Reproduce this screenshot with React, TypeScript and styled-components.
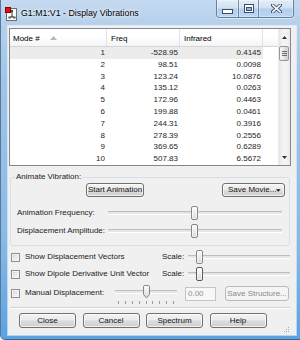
import React from 'react';
import styled, { createGlobalStyle } from 'styled-components';

const FONT = `"Liberation Sans", Arial, sans-serif`;

const GlobalStyle = createGlobalStyle`
  html, body { margin: 0; padding: 0; background: #fff; }
  body { font-family: ${FONT}; font-size: 8px; color: #222; }
  *, *::before, *::after { box-sizing: border-box; }
`;

const Window = styled.div`
  width: 300px;
  height: 340px;
  display: flex;
  flex-direction: column;
  background: linear-gradient(180deg, #c4d9ef 0px, #b5d0eb 25px, #a2c5e7 80px, #89b9e5 240px, #5aa2e2 100%);
  border-left: 1px solid #55799e;
  border-bottom: 1px solid #3d6588;
  border-bottom-left-radius: 5px;
  overflow: hidden;
`;

const TitleBar = styled.div`
  height: 26px;
  flex-shrink: 0;
  display: flex;
  align-items: flex-start;
`;

const IconWrap = styled.div`
  margin: 7px 0 0 4px;
  width: 13px;
  height: 14px;
  display: flex;
`;

const Title = styled.div`
  margin: 7px 0 0 3px;
  font-size: 8.8px;
  line-height: 12px;
  color: #000;
  white-space: nowrap;
  text-shadow: 0 0 6px rgba(255, 255, 255, 0.9), 0 0 3px rgba(255, 255, 255, 0.8);
`;

const Caption = styled.div`
  margin: 0 6px 0 auto;
  height: 18px;
  display: flex;
  border: 1px solid rgba(45, 70, 105, 0.6);
  border-top: none;
  border-radius: 0 0 4px 4px;
  overflow: hidden;
  box-shadow: 0 1px 0 rgba(255, 255, 255, 0.5);
`;

const CapBtn = styled.div<{ $w: number }>`
  width: ${(p) => p.$w}px;
  height: 100%;
  display: flex;
  align-items: center;
  justify-content: center;
  background: linear-gradient(180deg, rgba(255, 255, 255, 0.5) 0%, rgba(255, 255, 255, 0.28) 48%, rgba(150, 190, 230, 0.35) 52%, rgba(190, 220, 248, 0.5) 100%);
  box-shadow: inset 0 0 0 1px rgba(255, 255, 255, 0.35);
  & + & { border-left: 1px solid rgba(45, 70, 105, 0.55); }
`;

const Frame = styled.div`
  flex: 1;
  display: flex;
  padding: 0 4px 4px 7px;
`;

const Client = styled.div`
  flex: 1;
  display: flex;
  flex-direction: column;
  background: #f0f0f0;
  box-shadow: 0 0 0 1px rgba(255, 255, 255, 0.55);
`;

/* ---------- list view ---------- */
const ListView = styled.div`
  margin: 2px 5px 0 1px;
  height: 138px;
  border: 1px solid #828790;
  background: #fff;
  display: grid;
  grid-template-columns: 1fr 12px;
`;

const Table = styled.div`
  display: flex;
  flex-direction: column;
  min-width: 0;
`;

const HeaderRow = styled.div`
  display: grid;
  grid-template-columns: 97px 73px 83px 1fr;
  height: 18px;
  background: linear-gradient(180deg, #ffffff 0%, #ffffff 45%, #f3f4f6 100%);
  border-bottom: 1px solid #d5d5d5;
`;

const HeaderCell = styled.div<{ $pl: number; $last?: boolean }>`
  display: flex;
  align-items: center;
  padding: 2px 0 0 ${(p) => p.$pl}px;
  border-right: ${(p) => (p.$last ? 'none' : '1px solid #e2e3e5')};
  color: #000;
  white-space: nowrap;
`;

const SortArrow = styled.svg`
  margin-left: 10px;
  margin-top: -1px;
`;

const DataRow = styled.div`
  display: grid;
  grid-template-columns: 97px 73px 83px 1fr;
  height: 11.8px;
`;

const Cell = styled.div<{ $sel?: boolean }>`
  text-align: right;
  padding-right: 2px;
  line-height: 11.8px;
  background: ${(p) => (p.$sel ? '#ececec' : 'transparent')};
  color: #1e1e1e;
`;

const ScrollBar = styled.div`
  display: flex;
  flex-direction: column;
  background: linear-gradient(90deg, #e6e6e6 0%, #f3f3f3 30%, #f3f3f3 70%, #eaeaea 100%);
  border-left: 1px solid #ececec;
`;

const ScrollArrow = styled.div`
  height: 16px;
  display: flex;
  align-items: center;
  justify-content: center;
`;

const ScrollThumb = styled.div`
  height: 15px;
  margin: 1px 1px 0 0;
  border: 1px solid #979797;
  border-radius: 2px;
  background: linear-gradient(90deg, #f6f6f6 0%, #ececec 50%, #dedede 50%, #d4d4d4 100%);
  display: flex;
  align-items: center;
  justify-content: center;
`;

const ScrollTrack = styled.div`
  flex: 1;
`;

/* ---------- group box ---------- */
const Group = styled.fieldset`
  margin: 6px 6px 0 2px;
  padding: 1px 4px 7px 6px;
  border: 1px solid #d5dfe5;
  border-radius: 3px;
  min-width: 0;
`;

const Legend = styled.legend`
  padding: 0 1px;
  margin-left: -2px;
  line-height: 10px;
  font-size: 8px;
`;

const ButtonRow = styled.div`
  display: flex;
  height: 14px;
`;

const Btn = styled.button<{ $w: number; $h?: number; $ml?: number; $mt?: number }>`
  width: ${(p) => p.$w}px;
  height: ${(p) => p.$h ?? 15}px;
  margin: ${(p) => p.$mt ?? 0}px 0 0 ${(p) => (p.$ml === undefined ? 0 : p.$ml)}px;
  padding: 0;
  flex-shrink: 0;
  font: 8px/1 ${FONT};
  color: #141414;
  border: 1px solid #707070;
  border-radius: 3px;
  background: linear-gradient(180deg, #f3f3f3 0%, #ebebeb 45%, #dddddd 52%, #cfcfcf 100%);
  box-shadow: inset 0 0 0 1px rgba(255, 255, 255, 0.7);
  display: flex;
  align-items: center;
  justify-content: center;
  white-space: nowrap;
  &:disabled {
    border-color: #b5babd;
    background: #f4f4f4;
    color: #8a8a8a;
    box-shadow: none;
  }
`;

const SplitBtn = styled(Btn)`
  margin-left: auto;
  justify-content: space-between;
  padding: 0 3px 0 5px;
`;

const SliderRow = styled.div<{ $mt: number }>`
  display: flex;
  align-items: center;
  height: 14px;
  margin: ${(p) => p.$mt}px 3px 0 0;
`;

const RowLabel = styled.div<{ $w: number; $ml?: number; $mt?: number }>`
  width: ${(p) => p.$w}px;
  flex-shrink: 0;
  margin: ${(p) => p.$mt ?? 0}px 0 0 ${(p) => p.$ml ?? 0}px;
  line-height: 10px;
  white-space: nowrap;
`;

const Track = styled.div<{ $w?: number; $h?: number }>`
  position: relative;
  height: ${(p) => p.$h ?? 14}px;
  flex: ${(p) => (p.$w ? `0 0 ${p.$w}px` : '1 1 auto')};
  background: linear-gradient(
    180deg,
    transparent 5px,
    #bdbdbd 5px,
    #bdbdbd 6px,
    #e4e6e7 6px,
    #e4e6e7 8px,
    #ffffff 8px,
    #ffffff 9px,
    transparent 9px
  );
`;

const Thumb = styled.div<{ $strong?: boolean }>`
  position: absolute;
  top: 0;
  width: 7px;
  height: 100%;
  border: 1px solid ${(p) => (p.$strong ? '#5a5a5a' : '#878787')};
  border-radius: 2px;
  background: linear-gradient(180deg, #fdfdfd 0%, #ececec 50%, #dadada 100%);
  box-shadow: inset 0 0 0 1px rgba(255, 255, 255, 0.6);
`;

const PointThumb = styled.svg`
  position: absolute;
  top: 0;
`;

/* ---------- check rows ---------- */
const CheckRow = styled.div<{ $mt: number }>`
  display: flex;
  align-items: center;
  height: 14px;
  margin: ${(p) => p.$mt}px 6px 0 3px;
`;

const ManualRow = styled.div`
  display: flex;
  align-items: flex-start;
  margin: 4px 0 0 3px;
`;

const Check = styled.div<{ $mt?: number }>`
  width: 9px;
  height: 9px;
  flex-shrink: 0;
  margin-top: ${(p) => p.$mt ?? 0}px;
  border: 1px solid #8e8f8f;
  background: linear-gradient(135deg, #cfd3d8 0%, #e9ebed 55%, #f8f8f8 100%);
  box-shadow: inset 0 0 0 1px #f4f4f4;
`;

const ScaleLabel = styled.div`
  width: 26px;
  flex-shrink: 0;
  line-height: 10px;
`;

const SliderCol = styled.div`
  width: 62px;
  flex-shrink: 0;
  display: flex;
  flex-direction: column;
`;

const Ticks = styled.div`
  display: flex;
  justify-content: space-between;
  padding: 0 3px;
  margin-top: 3px;
  height: 3px;
`;

const Tick = styled.span`
  width: 1px;
  height: 3px;
  background: #9a9a9a;
`;

const ValueBox = styled.div`
  width: 31px;
  height: 14px;
  margin: 2px 0 0 8px;
  flex-shrink: 0;
  border: 1px solid #c2c6c9;
  background: #f7f7f7;
  color: #8f8f8f;
  line-height: 12px;
  padding-left: 2px;
`;

const Separator = styled.div`
  margin: 3px 6px 0 2px;
  height: 2px;
  border-top: 1px solid #d2d2d2;
  border-bottom: 1px solid #ffffff;
`;

const ButtonBar = styled.div`
  display: flex;
  gap: 6.5px;
  height: 15px;
  margin-top: 4px;
  padding-left: 11px;
`;

const Grip = styled.svg`
  margin: 0 6px -5px auto;
  align-self: flex-end;
`;

const rows: [number, string, string][] = [
  [1, '-528.95', '0.4145'],
  [2, '98.51', '0.0098'],
  [3, '123.24', '10.0876'],
  [4, '135.12', '0.0263'],
  [5, '172.96', '0.4463'],
  [6, '199.88', '0.0461'],
  [7, '244.31', '0.3916'],
  [8, '278.39', '0.2556'],
  [9, '369.65', '0.6289'],
  [10, '507.83', '6.5672'],
];

const thumbLeft = (v: number) => ({ left: `calc((100% - 7px) * ${v})` });

function AppIcon() {
  return (
    <IconWrap>
      <svg width="13" height="14" viewBox="0 0 13 14">
        <rect x="1.5" y="1.5" width="10" height="12" fill="#fff" stroke="#6d6d6d" />
        <path d="M7 4 V9 M4 10 H10 M7 9 L4.5 11.5 M7 9 L9.5 11.5" stroke="#555" strokeWidth="1.2" fill="none" />
        <circle cx="7" cy="4" r="1.2" fill="#444" />
        <circle cx="4" cy="10.5" r="1" fill="#777" />
        <circle cx="10" cy="10.5" r="1" fill="#777" />
        <rect x="0.5" y="0.5" width="5" height="5" fill="#e41010" stroke="#8a0000" />
      </svg>
    </IconWrap>
  );
}

function MinGlyph() {
  return (
    <svg width="11" height="5" viewBox="0 0 11 5" style={{ marginTop: 5 }}>
      <rect x="0.5" y="0.5" width="10" height="4" fill="#fff" stroke="#3a4e66" />
    </svg>
  );
}

function MaxGlyph() {
  return (
    <svg width="10" height="9" viewBox="0 0 10 9">
      <rect x="0.5" y="0.5" width="9" height="8" fill="#fff" stroke="#3a4e66" />
      <rect x="2.5" y="3.5" width="5" height="3" fill="#9ab8d6" stroke="#3a4e66" />
    </svg>
  );
}

function CloseGlyph() {
  return (
    <svg width="11" height="9" viewBox="0 0 11 9">
      <path d="M1.5 1 L9.5 8 M9.5 1 L1.5 8" stroke="#3a4e66" strokeWidth="3.4" strokeLinecap="square" />
      <path d="M1.8 1.2 L9.2 7.8 M9.2 1.2 L1.8 7.8" stroke="#fff" strokeWidth="1.6" strokeLinecap="square" />
    </svg>
  );
}

function Slider({ value, strong, width, height }: { value: number; strong?: boolean; width?: number; height?: number }) {
  return (
    <Track $w={width} $h={height}>
      <Thumb $strong={strong} style={thumbLeft(value)} />
    </Track>
  );
}

export default function App() {
  return (
    <>
      <GlobalStyle />
      <Window>
        <TitleBar>
          <AppIcon />
          <Title>G1:M1:V1 - Display Vibrations</Title>
          <Caption>
            <CapBtn $w={21}>
              <MinGlyph />
            </CapBtn>
            <CapBtn $w={20}>
              <MaxGlyph />
            </CapBtn>
            <CapBtn $w={35}>
              <CloseGlyph />
            </CapBtn>
          </Caption>
        </TitleBar>
        <Frame>
          <Client>
            <ListView>
              <Table>
                <HeaderRow>
                  <HeaderCell $pl={3}>
                    Mode #
                    <SortArrow width="7" height="4" viewBox="0 0 7 4">
                      <path d="M0 4 L3.5 0 L7 4 Z" fill="#b3b8be" />
                    </SortArrow>
                  </HeaderCell>
                  <HeaderCell $pl={4}>Freq</HeaderCell>
                  <HeaderCell $pl={4}>Infrared</HeaderCell>
                  <HeaderCell $pl={0} $last />
                </HeaderRow>
                {rows.map(([m, f, ir]) => (
                  <DataRow key={m}>
                    <Cell $sel={m === 1}>{m}</Cell>
                    <Cell $sel={m === 1}>{f}</Cell>
                    <Cell $sel={m === 1}>{ir}</Cell>
                    <Cell />
                  </DataRow>
                ))}
              </Table>
              <ScrollBar>
                <ScrollArrow>
                  <svg width="5" height="3" viewBox="0 0 5 3">
                    <path d="M0 3 L2.5 0 L5 3 Z" fill="#333" />
                  </svg>
                </ScrollArrow>
                <ScrollThumb>
                  <svg width="5" height="5" viewBox="0 0 5 5">
                    <path d="M0 0.5 H5 M0 2.5 H5 M0 4.5 H5" stroke="#6a6a6a" strokeWidth="1" />
                  </svg>
                </ScrollThumb>
                <ScrollTrack />
                <ScrollArrow>
                  <svg width="5" height="3" viewBox="0 0 5 3">
                    <path d="M0 0 L2.5 3 L5 0 Z" fill="#333" />
                  </svg>
                </ScrollArrow>
              </ScrollBar>
            </ListView>

            <Group>
              <Legend>Animate Vibration:</Legend>
              <ButtonRow>
                <Btn $w={58} $h={14} $ml={69}>
                  Start Animation
                </Btn>
                <SplitBtn $w={63} $h={14}>
                  <span>Save Movie...</span>
                  <svg width="5" height="3" viewBox="0 0 5 3">
                    <path d="M0 0 L2.5 3 L5 0 Z" fill="#111" />
                  </svg>
                </SplitBtn>
              </ButtonRow>
              <SliderRow $mt={9}>
                <RowLabel $w={91}>Animation Frequency:</RowLabel>
                <Slider value={0.497} />
              </SliderRow>
              <SliderRow $mt={4}>
                <RowLabel $w={91}>Displacement Amplitude:</RowLabel>
                <Slider value={0.497} />
              </SliderRow>
            </Group>

            <CheckRow $mt={4}>
              <Check />
              <RowLabel $w={137} $ml={5}>
                Show Displacement Vectors
              </RowLabel>
              <ScaleLabel>Scale:</ScaleLabel>
              <Slider value={0.084} />
            </CheckRow>
            <CheckRow $mt={3}>
              <Check />
              <RowLabel $w={137} $ml={5}>
                Show Dipole Derivative Unit Vector
              </RowLabel>
              <ScaleLabel>Scale:</ScaleLabel>
              <Slider value={0.084} strong />
            </CheckRow>
            <ManualRow>
              <Check $mt={4} />
              <RowLabel $w={90} $ml={5} $mt={3}>
                Manual Displacement:
              </RowLabel>
              <SliderCol>
                <Track $h={13}>
                  <PointThumb width="7" height="14" viewBox="0 0 7 14" style={thumbLeft(0.5)}>
                    <defs>
                      <linearGradient id="pt" x1="0" y1="0" x2="0" y2="1">
                        <stop offset="0" stopColor="#fdfdfd" />
                        <stop offset="1" stopColor="#d8d8d8" />
                      </linearGradient>
                    </defs>
                    <path
                      d="M0.5 1.8 Q0.5 0.5 1.8 0.5 H5.2 Q6.5 0.5 6.5 1.8 V9.5 L3.5 13 L0.5 9.5 Z"
                      fill="url(#pt)"
                      stroke="#858585"
                    />
                  </PointThumb>
                </Track>
                <Ticks>
                  {Array.from({ length: 9 }, (_, i) => (
                    <Tick key={i} />
                  ))}
                </Ticks>
              </SliderCol>
              <ValueBox>0.00</ValueBox>
              <Btn $w={64} $h={15} $ml={9} $mt={1} disabled>
                Save Structure...
              </Btn>
            </ManualRow>

            <Separator />

            <ButtonBar>
              <Btn $w={57}>Close</Btn>
              <Btn $w={57}>Cancel</Btn>
              <Btn $w={57}>Spectrum</Btn>
              <Btn $w={57}>Help</Btn>
              <Grip width="7" height="7" viewBox="0 0 7 7">
                <g fill="#a7a7a7">
                  <rect x="5" y="1" width="1" height="1" />
                  <rect x="3" y="3" width="1" height="1" />
                  <rect x="5" y="3" width="1" height="1" />
                  <rect x="1" y="5" width="1" height="1" />
                  <rect x="3" y="5" width="1" height="1" />
                  <rect x="5" y="5" width="1" height="1" />
                </g>
              </Grip>
            </ButtonBar>
          </Client>
        </Frame>
      </Window>
    </>
  );
}
